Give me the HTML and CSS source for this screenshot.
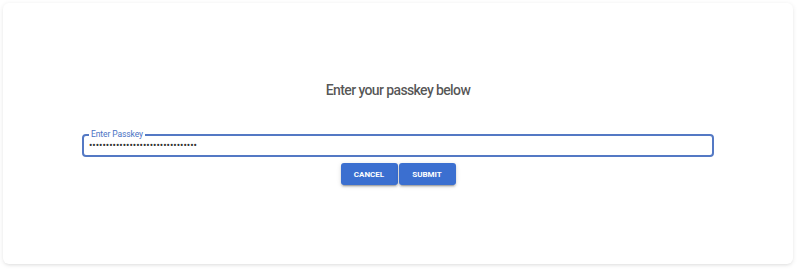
FILE: index.html
```html
<!DOCTYPE html>
<html lang="en">
<head>
<meta charset="utf-8">
<title>Enter passkey</title>
<link rel="stylesheet" href="styles.css">
</head>
<body>
<div class="page">
  <div class="card">
    <h2 class="title">Enter your passkey below</h2>
    <div class="field">
      <span class="label">Enter Passkey</span>
      <span class="dots">••••••••••••••••••••••••••••••••</span>
    </div>
    <div class="actions">
      <button class="btn" type="button">Cancel</button>
      <button class="btn" type="button">Submit</button>
    </div>
  </div>
</div>
</body>
</html>
```

FILE: styles.css
```css
html, body {
  margin: 0;
  padding: 0;
  background: #ffffff;
  font-family: Roboto, "Liberation Sans", Arial, sans-serif;
}

.page {
  padding: 3px 13px 9px 3px;
}

.card {
  height: 261px;
  box-sizing: border-box;
  background: #ffffff;
  border-radius: 6px;
  box-shadow: 0 1px 5px rgba(0, 0, 0, 0.09), 0 2px 3px -1px rgba(0, 0, 0, 0.06);
  display: flex;
  flex-direction: column;
  align-items: center;
  justify-content: center;
  padding-bottom: 2px;
}

.title {
  margin: 0 0 34px;
  font-size: 14px;
  line-height: 20px;
  font-weight: 500;
  letter-spacing: -0.62px;
  color: rgba(0, 0, 0, 0.68);
}

.field {
  position: relative;
  width: 80%;
  height: 23px;
  box-sizing: border-box;
  border: 2px solid #5479c4;
  border-radius: 4px;
  display: flex;
  align-items: center;
  padding: 1px 5px 0;
}

.label {
  position: absolute;
  left: 5px;
  top: -7px;
  padding: 0 2px;
  background: #ffffff;
  font-size: 8.5px;
  line-height: 10px;
  color: #4a72c4;
  letter-spacing: -0.1px;
}

.dots {
  font-size: 10px;
  line-height: 12px;
  color: #333333;
  letter-spacing: 0;
}

.actions {
  display: flex;
  gap: 1px;
  margin-top: 6px;
}

.btn {
  width: 57px;
  height: 22px;
  border: none;
  border-radius: 3px;
  background: #3b6fd0;
  color: #ffffff;
  font-family: Roboto, "Liberation Sans", Arial, sans-serif;
  font-size: 8px;
  font-weight: 700;
  text-transform: uppercase;
  letter-spacing: 0;
  padding: 0;
  box-shadow: 0 3px 1px -2px rgba(0, 0, 0, 0.2), 0 2px 2px 0 rgba(0, 0, 0, 0.14), 0 1px 5px 0 rgba(0, 0, 0, 0.12);
  cursor: pointer;
}
```
